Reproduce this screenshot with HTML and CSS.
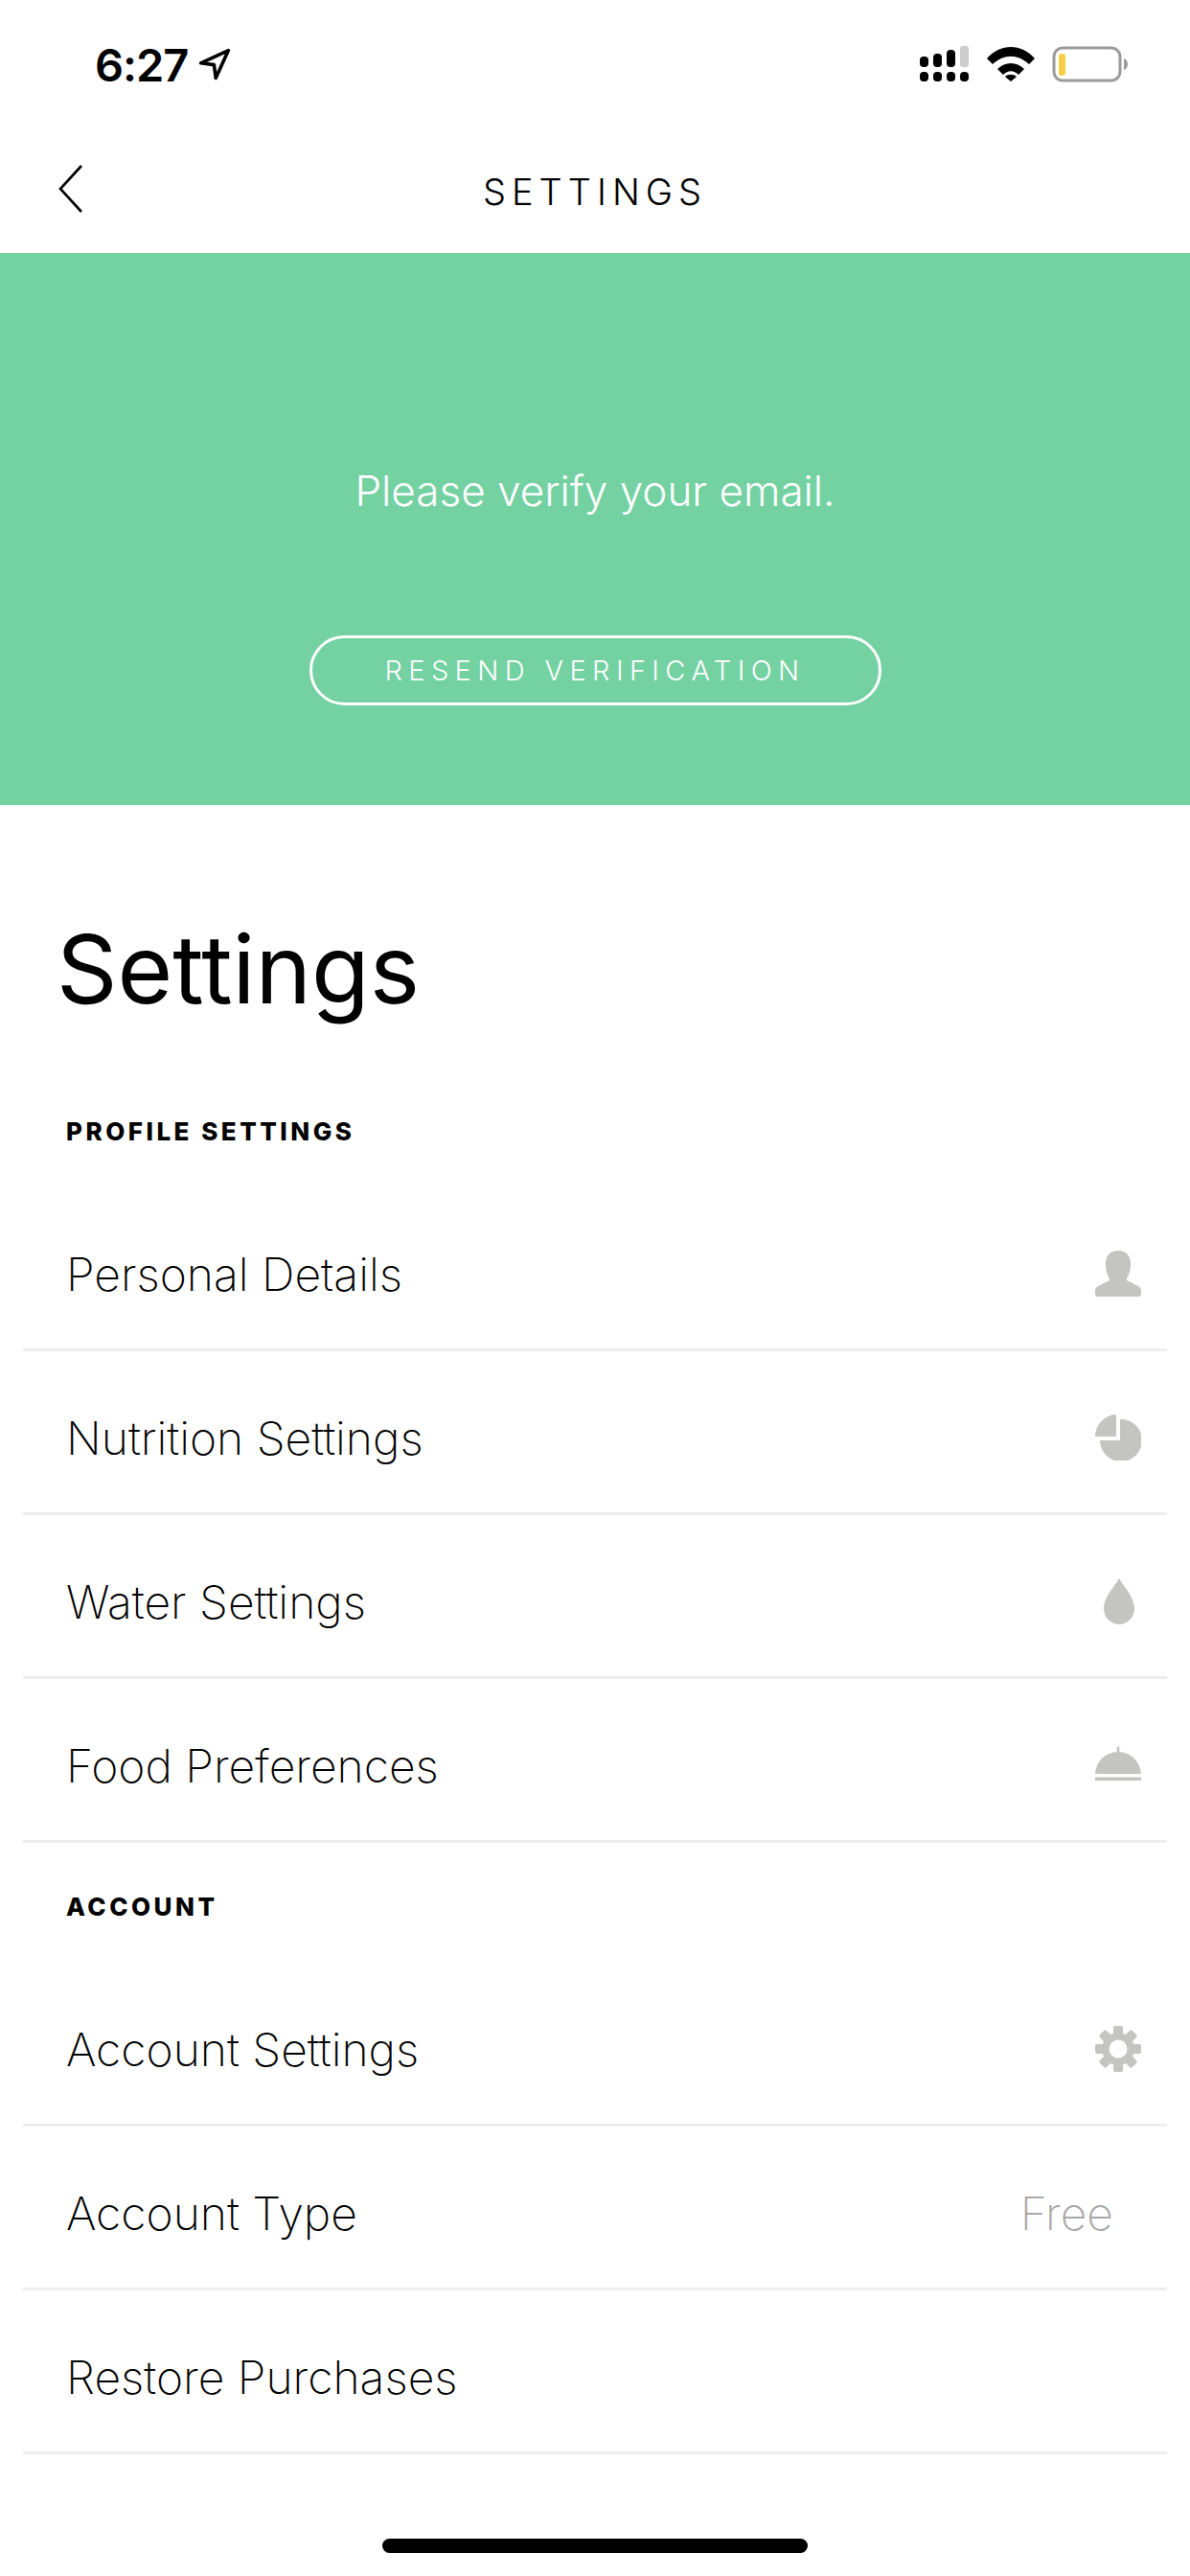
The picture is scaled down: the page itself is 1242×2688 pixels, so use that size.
FILE: index.html
```html
<!DOCTYPE HTML>
<html>
	<head>
		<meta charset='utf-8' />
		<title>Settings</title>
		<link rel="stylesheet" href="styles.css">
	</head>
	<body>
		<div class='status'>
			<div class='status-left'>
				<span class='time'>6:27</span>
				<svg class='loc' viewBox='0 0 30 30'><path d='M27 3 L3 14 L14.5 15.5 L16 27 Z' fill='none' stroke='#000' stroke-width='3' stroke-linejoin='round'/></svg>
			</div>
			<div class='status-right'>
				<svg class='signal' viewBox='0 0 52 38'>
					<rect x='0' y='11' width='9' height='11' rx='4' fill='#000'/>
					<rect x='14' y='8' width='9' height='14' rx='4' fill='#000'/>
					<rect x='28' y='4' width='9' height='18' rx='4' fill='#000'/>
					<rect x='42' y='0' width='9' height='22' rx='3' fill='#ccc'/>
					<rect x='0' y='27' width='9' height='10' rx='4' fill='#000'/>
					<rect x='14' y='27' width='9' height='10' rx='4' fill='#000'/>
					<rect x='28' y='27' width='9' height='10' rx='4' fill='#000'/>
					<rect x='42' y='27' width='9' height='10' rx='4' fill='#000'/>
				</svg>
				<svg class='wifi' viewBox='0 0 50 36'>
					<path d='M0 12 C14 -4 36 -4 50 12 L44 18 C32 7 18 7 6 18 Z' fill='#000'/>
					<path d='M11 23 C19 15 31 15 39 23 L33 29 C28 24 22 24 17 29 Z' fill='#000'/>
					<path d='M19 31 C22 28 28 28 31 31 L25 36 Z' fill='#000'/>
				</svg>
				<svg class='battery' viewBox='0 0 80 38'>
					<rect x='2' y='2' width='69' height='34' rx='9' fill='#fff' stroke='#9b9b9b' stroke-width='3'/>
					<rect x='7' y='8' width='7' height='23' rx='3' fill='#f7cf47'/>
					<path d='M75 13 C78 14 79 17 79 19 C79 21 78 24 75 25 Z' fill='#9b9b9b'/>
				</svg>
			</div>
		</div>
		<div class='topbar'>
			<svg class='back' viewBox='0 0 30 52'><path d='M26 2 L4 26 L26 50' fill='none' stroke='#000' stroke-width='2.6'/></svg>
			<div class='topbar-title'>SETTINGS</div>
		</div>
		<div class='banner'>
			<div class='banner-text'>Please verify your email.</div>
			<a class='banner-btn' href='#'>RESEND VERIFICATION</a>
		</div>
		<h1 class='page-title'>Settings</h1>
		<div class='section-label first'>PROFILE SETTINGS</div>
		<ul class='rows'>
			<li>
				<span>Personal Details</span>
				<svg class='ico' viewBox='0 0 48 48'><path d='M24 0 C33 0 37 6 37 14 C37 21 35 26 33 29 L33 31 L45 37 C47 38 48 40 48 42 L48 45 C48 47 47 48 45 48 L3 48 C1 48 0 47 0 45 L0 42 C0 40 1 38 3 37 L15 31 L15 29 C13 26 11 21 11 14 C11 6 15 0 24 0 Z' fill='#c4c4c2'/></svg>
			</li>
			<li>
				<span>Nutrition Settings</span>
				<svg class='ico' viewBox='0 0 48 48'><path d='M26 5 A22 22 0 1 1 5 27 L26 27 Z' fill='#c4c4c2'/><path d='M22 0 L22 23 L0 23 A23 23 0 0 1 22 0 Z' fill='#c4c4c2'/></svg>
			</li>
			<li>
				<span>Water Settings</span>
				<svg class='ico' viewBox='0 0 48 48'><path d='M25 0 C30 9 41 19 41 32 C41 41 33 48 25 48 C17 48 9 41 9 32 C9 19 20 9 25 0 Z' fill='#c4c4c2'/></svg>
			</li>
			<li>
				<span>Food Preferences</span>
				<svg class='ico' viewBox='0 -5 48 48'><path d='M22.7 0 C23 -1 25 -1 25.3 0 L25.3 5 C38 6 47 15 48 28 L0 28 C1 15 10 6 22.7 5 Z' fill='#c4c4c2'/><rect x='0' y='31.5' width='48' height='3.5' fill='#c4c4c2'/></svg>
			</li>
		</ul>
		<div class='section-label'>ACCOUNT</div>
		<ul class='rows'>
			<li>
				<span>Account Settings</span>
				<svg class='ico' viewBox='0 0 48 48'>
					<g fill='#c4c4c2'>
						<path fill-rule='evenodd' d='M24 7 A17 17 0 1 0 24 41 A17 17 0 1 0 24 7 Z M24 14.5 A9.5 9.5 0 1 1 24 33.5 A9.5 9.5 0 1 1 24 14.5 Z'/>
						<rect x='19' y='0' width='10' height='9' rx='2'/>
						<rect x='19' y='0' width='10' height='9' rx='2' transform='rotate(45 24 24)'/>
						<rect x='19' y='0' width='10' height='9' rx='2' transform='rotate(90 24 24)'/>
						<rect x='19' y='0' width='10' height='9' rx='2' transform='rotate(135 24 24)'/>
						<rect x='19' y='0' width='10' height='9' rx='2' transform='rotate(180 24 24)'/>
						<rect x='19' y='0' width='10' height='9' rx='2' transform='rotate(225 24 24)'/>
						<rect x='19' y='0' width='10' height='9' rx='2' transform='rotate(270 24 24)'/>
						<rect x='19' y='0' width='10' height='9' rx='2' transform='rotate(315 24 24)'/>
					</g>
				</svg>
			</li>
			<li>
				<span>Account Type</span>
				<span class='row-value'>Free</span>
			</li>
			<li>
				<span>Restore Purchases</span>
			</li>
		</ul>
		<div class='home-bar'></div>
	</body>
</html>
```

FILE: styles.css
```css
body{
	margin:0;
	width:1242px;
	height:2688px;
	position:relative;
	overflow:hidden;
	background:#fff;
	color:#000;
	font-family:"Inter","Lato",sans-serif;
}
ul,li{margin:0;padding:0;list-style:none;}

.status{
	display:flex;
	justify-content:space-between;
	align-items:center;
	height:134px;
	box-sizing:border-box;
	padding:0 64px 0 99px;
}
.status-left{
	display:flex;
	align-items:center;
	gap:10px;
}
.time{
	font-size:47px;
	font-weight:600;
	letter-spacing:-1px;
}
.loc{width:36px;height:36px;}
.status-right{
	display:flex;
	align-items:center;
	gap:18px;
}
.signal{width:52px;height:38px;}
.wifi{width:50px;height:36px;}
.battery{width:80px;height:38px;}

.topbar{
	position:relative;
	height:130px;
	padding-top:2px;
	box-sizing:border-box;
	display:flex;
	align-items:center;
	justify-content:center;
}
.back{
	position:absolute;
	left:59px;
	top:37px;
	width:30px;
	height:52px;
}
.topbar-title{
	font-size:38px;
	font-weight:300;
	letter-spacing:6px;
}

.banner{
	background:#74d1a2;
	height:576px;
	display:flex;
	flex-direction:column;
	align-items:center;
	color:#fff;
}
.banner-text{
	margin-top:221px;
	font-size:44px;
	line-height:54px;
	font-weight:300;
}
.banner-btn{
	margin-top:124px;
	box-sizing:border-box;
	width:597px;
	height:73px;
	border:3px solid #fff;
	border-radius:37px;
	color:#fff;
	text-decoration:none;
	font-size:29px;
	font-weight:300;
	letter-spacing:6.4px;
	display:flex;
	align-items:center;
	justify-content:center;
}

.page-title{
	margin:106px 0 88px 59px;
	font-size:99px;
	line-height:130px;
	font-weight:400;
}
.section-label{
	margin:0 0 41px 69px;
	font-size:26px;
	line-height:34px;
	font-weight:800;
	letter-spacing:3.5px;
}
.section-label:not(.first){padding-top:50px;}

.rows{margin:0 24px;}
.rows li{
	display:flex;
	justify-content:space-between;
	align-items:center;
	height:171px;
	box-sizing:border-box;
	border-bottom:3px solid #eeeef0;
	padding:12px 27px 0 45px;
	font-size:48px;
	font-weight:150;
}
.ico{width:48px;height:48px;}
.row-value{color:#a8a8a6;margin-right:29px;}

.home-bar{
	position:absolute;
	left:399px;
	bottom:24px;
	width:444px;
	height:15px;
	border-radius:8px;
	background:#000;
}
```
